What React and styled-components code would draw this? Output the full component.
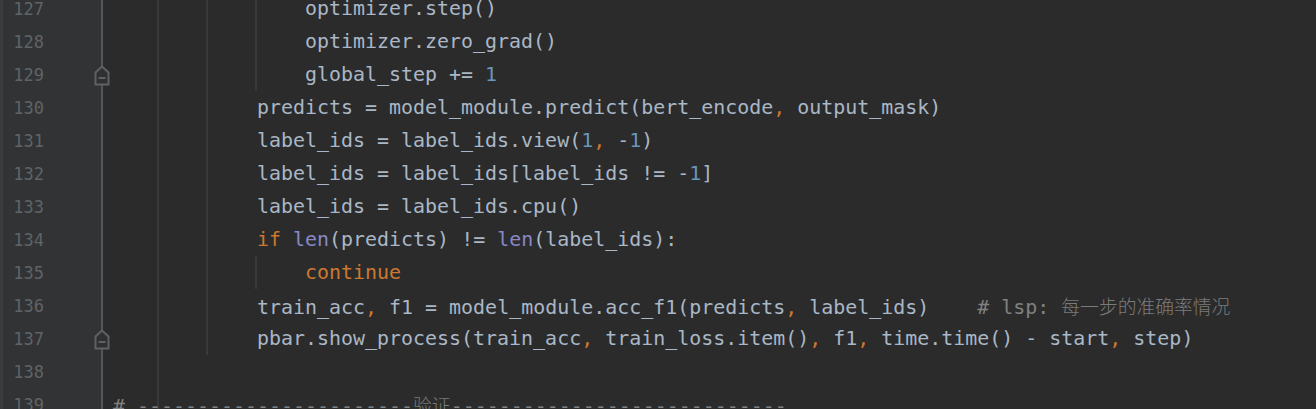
import React from 'react'
import styled, { createGlobalStyle } from 'styled-components'

const GlobalStyle = createGlobalStyle`
  html, body {
    margin: 0;
    padding: 0;
    background: #2b2b2b;
  }
`

const Editor = styled.div`
  display: flex;
  width: 1316px;
  height: 409px;
  overflow: hidden;
  background: #2b2b2b;
  font-family: "DejaVu Sans Mono", "Liberation Mono", monospace;
`

const EdgeStrip = styled.div`
  flex: 0 0 3px;
  background: #3a3d3f;
`

const Gutter = styled.div`
  flex: 0 0 98px;
  background: #313335;
  border-right: 2px solid #555657;
`

const Rows = styled.div`
  display: flex;
  flex-direction: column;
  margin-top: -8px;
`

const GutterRow = styled.div`
  position: relative;
  height: 33px;
  display: grid;
  grid-template-columns: 41px 1fr;
  align-items: center;
`

const LineNumber = styled.span`
  text-align: right;
  font-size: 17px;
  color: #606366;
`

const FoldIcon = styled.svg`
  position: absolute;
  right: -9px;
  top: 7px;
`

const Code = styled.div`
  flex: 1;
  min-width: 0;
`

const guideBg = (n) =>
  n
    ? Array.from({ length: n }, (_, i) => `linear-gradient(#393939, #393939) ${54 + 49 * i}px 0 / 2px 100% no-repeat`).join(', ')
    : 'none'

const CodeLine = styled.div`
  height: 33px;
  line-height: 33px;
  padding-left: 10px;
  white-space: pre;
  font-size: 19.95px;
  color: #a9b7c6;
  background: ${(p) => guideBg(p.$guides)};
`

const Keyword = styled.span`
  color: #cc7832;
`

const Comma = styled.span`
  color: #cc7832;
`

const Num = styled.span`
  color: #6897bb;
`

const Builtin = styled.span`
  color: #8888c6;
`

const Comment = styled.span`
  color: #808080;
`

const Han = styled.span`
  font-family: "Noto Sans CJK SC", sans-serif;
  font-size: 18.8px;
  font-weight: 300;
  color: #7b7b7b;
`

const FoldMark = () => (
  <FoldIcon width="16" height="21" viewBox="0 0 16 21">
    <path d="M1.5 7.5 L8 1.5 L14.5 7.5 V19.5 H1.5 Z" fill="#2f3032" stroke="#5f6264" strokeWidth="2" strokeLinejoin="miter" />
    <path d="M4.5 13 H11.5" stroke="#5f6264" strokeWidth="2" />
  </FoldIcon>
)

const lines = [
  { n: 127, guides: 3, code: <>{'                optimizer.step()'}</> },
  { n: 128, guides: 3, code: <>{'                optimizer.zero_grad()'}</> },
  { n: 129, guides: 3, fold: true, code: <>{'                global_step += '}<Num>1</Num></> },
  { n: 130, guides: 2, code: <>{'            predicts = model_module.predict(bert_encode'}<Comma>,</Comma>{' output_mask)'}</> },
  { n: 131, guides: 2, code: <>{'            label_ids = label_ids.view('}<Num>1</Num><Comma>,</Comma>{' -'}<Num>1</Num>{')'}</> },
  { n: 132, guides: 2, code: <>{'            label_ids = label_ids[label_ids != -'}<Num>1</Num>{']'}</> },
  { n: 133, guides: 2, code: <>{'            label_ids = label_ids.cpu()'}</> },
  { n: 134, guides: 2, code: <>{'            '}<Keyword>if</Keyword>{' '}<Builtin>len</Builtin>{'(predicts) != '}<Builtin>len</Builtin>{'(label_ids):'}</> },
  { n: 135, guides: 3, code: <>{'                '}<Keyword>continue</Keyword></> },
  {
    n: 136,
    guides: 2,
    code: (
      <>
        {'            train_acc'}<Comma>,</Comma>{' f1 = model_module.acc_f1(predicts'}<Comma>,</Comma>{' label_ids)    '}
        <Comment># lsp: <Han>每一步的准确率情况</Han></Comment>
      </>
    ),
  },
  {
    n: 137,
    guides: 2,
    fold: true,
    code: (
      <>
        {'            pbar.show_process(train_acc'}<Comma>,</Comma>{' train_loss.item()'}<Comma>,</Comma>{' f1'}<Comma>,</Comma>
        {' time.time() - start'}<Comma>,</Comma>{' step)'}
      </>
    ),
  },
  { n: 138, guides: 1, code: null },
  {
    n: 139,
    guides: 1,
    code: (
      <Comment>
        {'# -----------------------'}<Han>验证</Han>{'----------------------------'}
      </Comment>
    ),
  },
]

const App = () => {
  return (
    <>
      <GlobalStyle />
      <Editor>
        <EdgeStrip />
        <Gutter>
          <Rows>
            {lines.map((l) => (
              <GutterRow key={l.n}>
                <LineNumber>{l.n}</LineNumber>
                {l.fold && <FoldMark />}
              </GutterRow>
            ))}
          </Rows>
        </Gutter>
        <Code>
          <Rows>
            {lines.map((l) => (
              <CodeLine key={l.n} $guides={l.guides}>
                {l.code}
              </CodeLine>
            ))}
          </Rows>
        </Code>
      </Editor>
    </>
  )
}

export default App
